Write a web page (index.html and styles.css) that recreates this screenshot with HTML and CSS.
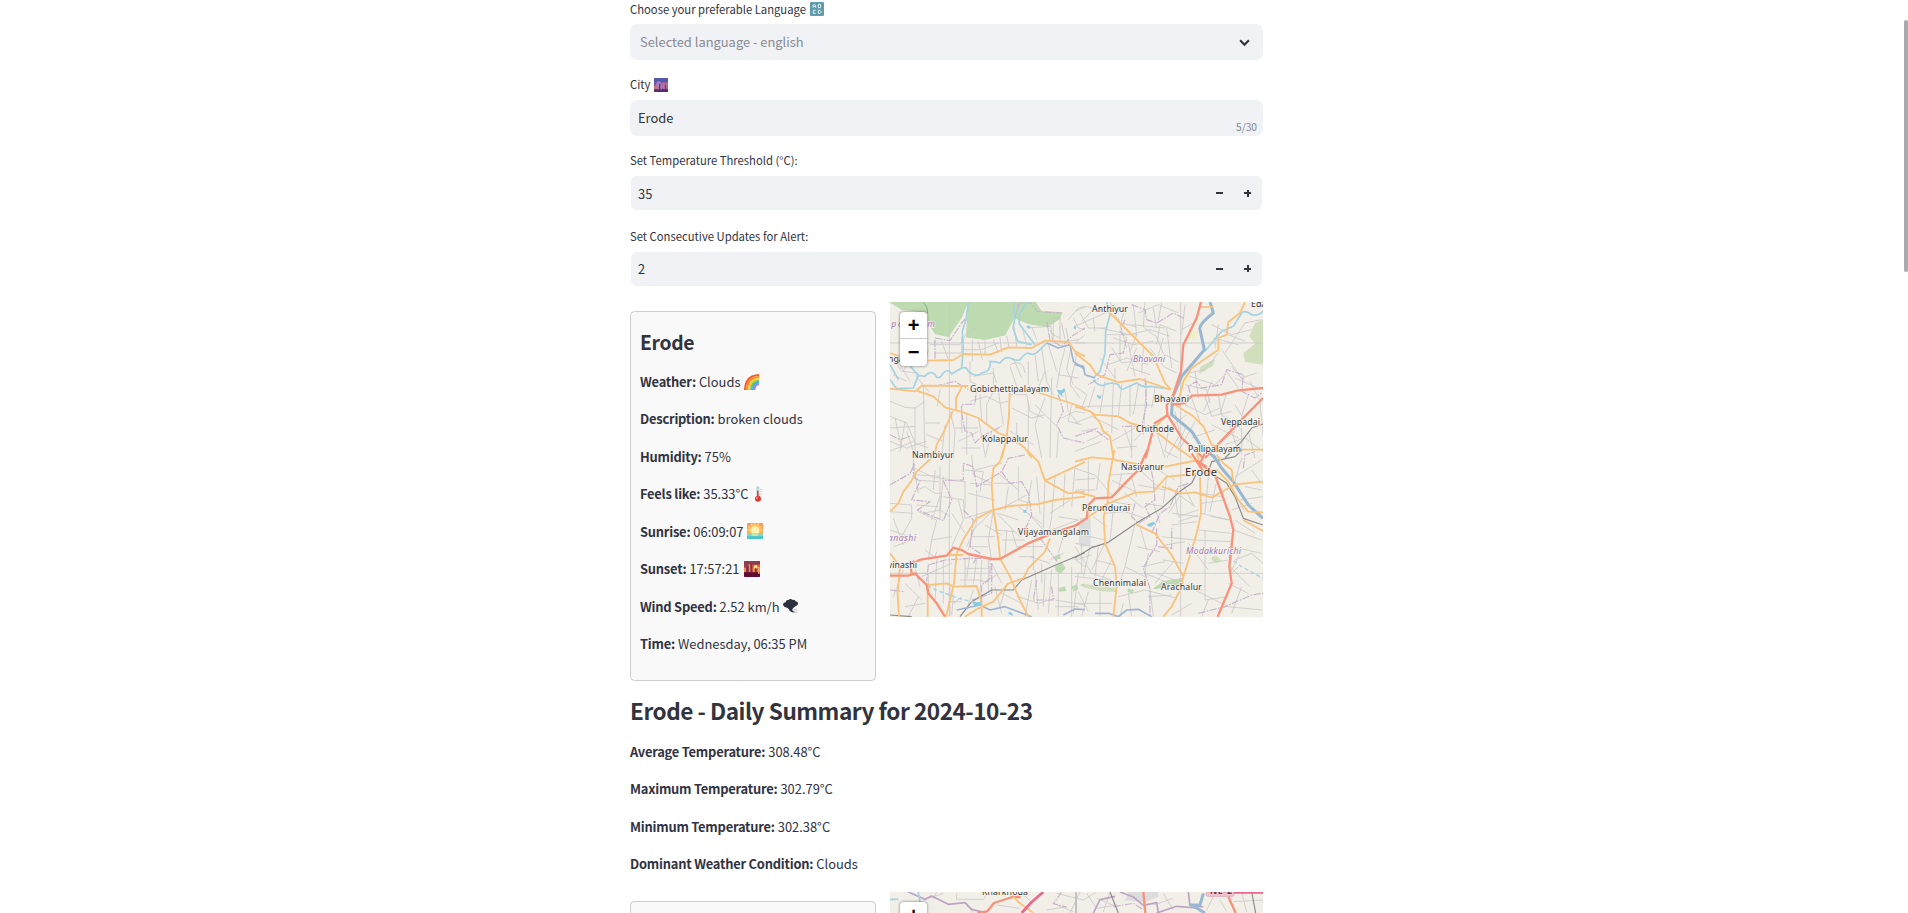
FILE: index.html
```html
<!DOCTYPE html>
<html lang="en">
<head>
<meta charset="utf-8">
<title>Weather</title>
<link rel="stylesheet" href="styles.css">
</head>
<body>
<main class="page">
  <section class="form">
    <div class="field">
      <label class="label label-first">Choose your preferable Language
        <svg class="emoji-sm" viewBox="0 0 42 42"><rect width="42" height="42" rx="4" fill="#5f9bab"/><g fill="none" stroke="#e3f1f4" stroke-width="3"><path d="M9 17v-7l4-3 4 3v7M9 13h8M25 7v10h6q3-2 0-5 3-3 0-5zM17 25h-7v9h7M25 25v9h5l3-3v-3l-3-3z"/></g></svg>
      </label>
      <div class="box select"><span class="placeholder">Selected language - english</span>
        <svg class="chevron" viewBox="0 0 10 8"><path d="M1 2l4 4 4-4" fill="none" stroke="#31333f" stroke-width="2"/></svg></div>
    </div>
    <div class="field">
      <label class="label">City
        <svg class="emoji-sm" viewBox="0 0 42 42"><rect width="42" height="42" rx="3" fill="#7853a0"/><path d="M0 3q0-3 3-3h36q3 0 3 3v7H0z" fill="#5259a8"/><path d="M23 14h19v18H23z" fill="#b46aa5"/><path d="M3 24l8-15 9 3 6 16-4 8H3z" fill="#a87bc4"/><path d="M0 25h10v9H0zM27 19h4v14h-4z" fill="#bd7769"/><path d="M0 34h42v5q0 3-3 3H3q-3 0-3-3z" fill="#592b71"/><path d="M15 17h4v16h-4zM33 20h3v12h-3z" fill="#5b347d"/></svg>
      </label>
      <div class="box"><span class="value">Erode</span><span class="count">5/30</span></div>
    </div>
    <div class="field">
      <label class="label">Set Temperature Threshold (°C):</label>
      <div class="box number"><span class="value">35</span><span class="steps"><i class="minus"></i><i class="plus"></i></span></div>
    </div>
    <div class="field">
      <label class="label">Set Consecutive Updates for Alert:</label>
      <div class="box number"><span class="value">2</span><span class="steps"><i class="minus"></i><i class="plus"></i></span></div>
    </div>
  </section>

  <section class="city">
    <article class="card">
      <h3 class="card-title">Erode</h3>
      <p class="line"><b>Weather:</b> Clouds
        <svg class="emoji" viewBox="0 0 48 48"><g fill="none" stroke-width="6"><path d="M3 48Q4 5 45 3" stroke="#fb5a22"/><path d="M9 48Q10 11 45 9" stroke="#ff8e1f"/><path d="M15 48Q16 17 45 15" stroke="#fbd22b"/><path d="M21 48Q22 22 45 20" stroke="#71c946"/><path d="M26 48Q27 27 45 25" stroke="#37b3e8"/><path d="M31 48Q32 32 45 30" stroke="#a184ed"/></g></svg></p>
      <p class="line"><b>Description:</b> broken clouds</p>
      <p class="line"><b>Humidity:</b> 75%</p>
      <p class="line"><b>Feels like:</b> 35.33°C
        <svg class="emoji thermo" viewBox="0 0 48 48"><path d="M16 4q5-8 9 0v30h-9z" fill="#b8d9df"/><circle cx="21" cy="38" r="9" fill="#d83a35"/><path d="M18 14h5v20h-5z" fill="#e04b3f"/><path d="M28 10h4M28 17h4M28 24h4" stroke="#a8adb0" stroke-width="2"/><circle cx="18" cy="36" r="3" fill="#ff8a78"/></svg></p>
      <p class="line"><b>Sunrise:</b> 06:09:07
        <svg class="emoji" viewBox="0 0 48 48"><defs><clipPath id="sky"><rect width="48" height="48" rx="3"/></clipPath></defs><g clip-path="url(#sky)"><path fill="#fc9562" d="M0 0h48v48H0z"/><circle cx="24" cy="24" r="23" fill="#fdb45c"/><path d="M24 24L1 8M24 24L12 0M24 24L36 0M24 24L47 8M24 24V0M24 24L0 20M24 24l24-4" stroke="#ffd777" stroke-width="3"/><circle cx="24" cy="23" r="13" fill="#fff3b1"/><path fill="#8ad3bd" d="M0 31h48v17H0z"/><path fill="#46c5cd" d="M0 40h48v8H0z"/><path fill="#c7e5b1" d="M12 31h24l-4 8H16z"/></g></svg></p>
      <p class="line"><b>Sunset:</b> 17:57:21
        <svg class="emoji" viewBox="0 0 48 48"><rect width="48" height="48" rx="3" fill="#a93c3e"/><path d="M0 3q0-3 3-3h42q3 0 3 3v8H0z" fill="#8f3b51"/><path d="M22 11h26v22H22z" fill="#d8683c"/><circle cx="35" cy="18" r="6" fill="#ffe084"/><path d="M0 20h6v14H0zM14 10h5v23h-5zM27 19h4v16h-4z" fill="#e79052"/><path d="M7 15h7v20H7zM20 8h5v26h-5zM33 22h5v12h-5z" fill="#873044"/><path d="M0 34h48v11q0 3-3 3H3q-3 0-3-3z" fill="#610d33"/><path d="M42 18h5v20h-5z" fill="#f0a85f"/></svg></p>
      <p class="line"><b>Wind Speed:</b> 2.52 km/h
        <svg class="emoji" viewBox="0 0 48 48"><path d="M0 19q1-6 8-6 1-8 8-7 7-6 13 0 7-2 9 4 8 2 7 9-4 6-10 7l-4 4-4 5 3 4 6 4q-10 2-16-5-3-7-8-9-10 0-12-10z" fill="#2e303e"/><path d="M29 37q8-4 13-1M31 43q6-2 10 0" stroke="#bbb" stroke-width="3" fill="none"/></svg></p>
      <p class="line"><b>Time:</b> Wednesday, 06:35 PM</p>
    </article>
    <div class="map">
      <svg class="tiles" width="373" height="315" viewBox="0 0 373 315">
        <rect width="373" height="315" fill="#f2efe9"/>
        <!-- north-west quarter -->
        <g class="quarter" transform="translate(-5 -4) scale(.33333)">
          <path class="wood" d="M15 12H250L243 118 300 125 360 112 388 60 430 78 487 87 525 62 532 42 470 41 452 12H250L230 60 190 118 150 108 128 75 128 45 50 35 15 14z"/>
          <path class="wood" d="M250 12H452L470 41 532 42 525 62 487 87 430 78 388 60 360 112 300 125 243 118z"/>
          <path d="M112 12q16 10 16 35" fill="none" stroke="#7fae86" stroke-width="3"/>
          <path class="minor" d="M193 12V480M15 135H600M135 140h90l20-35 40-20M150 165h80v-50M170 130l20 55M262 125v65M280 130l12 55M300 128v42M325 125l15 40M345 118l5 45M365 113l8 40M230 155h60l50-20M385 70l10 75M410 82l15 60M428 90l70-5 5 45M440 85l15 40M505 60v70M525 60v70M500 60h25M530 75l10 50M543 90l8 40 30-5M550 65l30-35 20-5M565 60l15 30 20 5M485 85l20 25 20 10M575 130l25-20M30 190l20 30 50 5M25 230l40 20M55 220l15-30M45 200l30 50M90 230l40 50M130 155l-10 40M115 265l5 215M120 310l-30 20-30-2-45-18M90 330v150M15 355l50 20 25 60 40 15M15 390l75-5M30 360l20 90M60 370l-15 90M15 430l50 20 60-20M65 400l20 60M15 460l70-30M120 375h45M125 410l50 20M165 275l-8 50M195 340l15 60-5 80M230 345v60M245 350v120M210 390h70M280 360l20 110M255 190v60l20 10M265 235l60-10 10 30M325 210v70l-20 40v60M285 290l5 80M255 310l50-15 40 20 25-5M340 280l15 100M375 290h50l10 50 40 20M400 280l60-10 20-50M375 205l20 60M385 180l25 60M375 200q40-20 45 25M430 190v70l30 20M450 170l10 80M470 150l15 100 20 40M490 140l25 80M540 150l-15 60-10 60M560 140l-15 75 20 45M575 170l-20 90 30 40M520 230l60 10M500 240l-5 240M540 280l10 60 30 40M480 300l-30 80 20 100M430 310v160M450 320l70 70M380 330l60 30 40-10M375 400l70 40M520 400l-5 80M550 370l40 10M560 320l-10 50M220 430l60-30M230 450h55M180 380l-10 100M320 400l-20 80M395 375v65M530 360l40-20 30 5"/>
          <path class="border" d="M150 125v65M150 120L195 128 230 75 243 60M388 65l15-50 35 0 20 25 70 5M485 70l10 55 35 20 30-30 40-25M230 345v-25l40-2 5-50M230 345l10 55 20 5 10 30 20-20 60-30M520 290l15 50-20 40 20 40 65 15M15 410l30 15 30-10M150 265l60-15 40 25"/>
          <path class="stream" d="M15 245L35 272 85 270 100 232 120 235Q135 215 150 230Q160 250 175 225Q190 210 200 228L230 210Q245 205 250 220Q275 240 290 225Q320 220 315 190 330 190 345 195Q360 175 375 180 392 190 405 185Q420 165 430 165 445 175 460 160L485 135M250 12L243 65 232 100 235 150 230 210M385 12L390 60 384 90 398 130 440 140M425 12L403 50 403 78 450 140M50 175L100 232M15 200l25 45"/>
          <path class="river" d="M485 135L520 150 555 140 565 190 600 215"/>
          <path class="road" d="M130 188L205 186 235 168 315 170 370 148 440 150 480 128 550 132 570 160 600 175M15 165l45 15M15 272L90 280 110 263 250 264M110 263L95 278 145 295 180 328 235 343 280 360 340 405 380 420 420 450 440 480M203 340L175 405 155 440 150 470M213 338V300L230 268M374 285L372 350 365 420 350 480M420 270L600 330"/>
          <path d="M520 285l-5-10 15 2 8-7 3 10-11 8 5 8-10-5zM565 90l4-8 5 5-2 8zM424 88l5-7 8 6-5 5z" class="lake"/>
        </g>
        <!-- north-east quarter -->
        <g class="quarter" transform="translate(185 -4) scale(.33333)">
          <path class="wood pale" d="M564 65L540 75 523 115 540 138 505 165 510 192 564 200zM370 225l8-20 42-23-5 20-40 25z"/>
          <path fill="#eef0c8" d="M340 95l30 5-8 25-20-3zM325 230l20 5-10 25-14-8z"/>
          <path class="minor" d="M317 12V480M0 135H564M0 40l35-15 65 20M0 85l90-40M15 45l25 45 55 0M20 70l40-40 50 12M55 60l5 40M95 110h90M75 90l90 20 60-15 60 20M105 12l25 60 55 15M150 30l-15 55M130 60l25 90M175 20l10 90-20 50M210 12l-5 75 40 30 20 50 45 25M235 30l10 60M260 12l-10 55M190 45l60-25 60 25M170 80l100 10M245 140l10-60 50 20M115 120l60 20 60-10M110 150l30 45 70-10M135 110v80M160 135l20 100M185 150l-30 70M205 150l-5 80M100 200l55-20 65 20M75 180l45 60M120 210v40M165 210l60 20M225 150l40 55 40 20M265 120l-20 70M275 90l15 120M330 20l-10 90M355 75l-35 20M410 80l60 30 60-15M430 80l-10 70M460 110l50 20M560 65l-50 10-60 90M415 120l75 20M440 155l60 85M430 165l-40 50-50 10M470 205l40 50M345 235l75 25 30-30M360 220l10 80M330 260l65 15 10 40M410 250l-20 55M455 220l35 50M480 240l70 30M500 240l45-15M525 250l30 60 9 100M430 290l10 60 60 45M455 285l-20 65M390 295l20 60 60-15M405 300l-20 40M350 300l25 70M330 320l60 30 45-20M335 350l-40 30M300 340l15 70M0 265l35 25-15 40M60 265l-20 65M0 330l45-5 190-4M90 250l-15 95M115 255l-5 150M140 260l-10 95M165 260v95M190 260l-15 90M215 250l-10 160M240 270l-10 60M0 375l50-20 80 40M20 400l50-10M35 430l65-30M110 430l70-40M125 450l60-5M170 380v100M150 395l20 60M225 380l-50 50M245 400l25 80M280 400l-10 60 40 20M315 410l-40 70M335 380l-30 75M360 370l-50 90M350 420l70-25M410 380l80 40M455 355l30 90M480 400l-70 50M480 320l30 50M520 290l-20 65M450 440l60-20 54 40M500 390v80M520 400l20 80M0 460l80-30"/>
          <path class="border" d="M170 20l40 15 5 30 30 10 50-30 30 15M150 65l-15 35 20 20-10 45-40 5-15 60-50 30M210 240l5 80-15 65-60 0M345 285l-5-20 25-15 15 20 60-10 15-45 50 15-5 50 40 20 20-15M0 415l60-20 40 30"/>
          <path class="rail" d="M564 378L530 390 500 430 450 480"/>
          <path class="stream" d="M95 12L105 50 92 100 90 165 75 220 55 240M55 245Q70 265 85 262 110 250 130 260 138 277 145 273L185 255Q205 270 225 265L275 272M564 40Q550 55 530 50 510 35 500 45L475 85 440 100 390 160"/>
          <path class="river wide" d="M405 12L415 45Q370 80 375 95L388 155 350 200 320 235 292 300 290 350 350 400 375 440 420 480"/>
          <path class="river" d="M0 198L25 205 30 230 60 240M0 200l20 5"/>
          <path class="road" d="M100 40L180 120 235 175 270 255 288 275M0 165L45 200 65 230 130 253 195 243 285 275M510 12L495 45 460 72 455 110 430 120 430 155 350 210 325 250 312 305M0 325L45 340 60 350 130 355 165 375 235 395 280 430 350 480M50 345L75 375 85 400 105 415 115 480M280 345L235 395M300 320L355 355 385 385 410 440 440 455H564M375 28l40-2"/>
          <path class="trunk" d="M378 12L365 60 325 140 318 220 295 290 275 322 277 350 320 420 385 480M290 320L330 315 350 293 440 290 490 277 564 270M564 300L500 365 390 480M280 350L240 375 225 430 212 480"/>
          <path class="lake" d="M65 290l10 4 5-3-4 12-8-3z"/>
        </g>
        <!-- south-west quarter -->
        <g class="quarter" transform="translate(-5 148) scale(.33333)">
          <path class="wood" d="M508 318l15-5 5 12-15 5zM510 350l20-12 12 15-15 18-15-8zM520 415l20-6 3 14-20 2zM560 410l15-8 5 15-15 8zM585 405l15-5v12z"/>
          <path d="M582 225h20v65l-20-5z" fill="#ddd"/>
          <path class="minor" d="M193 24V500M15 370H600M85 24l5 50 75 5M90 55l50 25 60 10M90 90l70 5M95 120l25-10 30 20 20 0M90 70l10 60M150 60l-5 60M165 50v160M175 80l-10 100 30 20M95 165l65 5M115 190l50-10M140 210l25-70M15 160l65 5 0 40-30 55M15 185l70 5M25 205l30 80M100 185l55 25-15 60-10 60M190 90l50 5 0 80M175 140l60 10 5 55 80-25M200 190l40 60M220 150l15 60-35 80M240 60l55 5-10 60M255 100l65 5M260 15l5 60 55 25M270 60l80-20M340 70l60 50M325 100l60 0M275 120v100l-30 70M325 180l-60 60-15 60M330 150l-80-20M325 180l-15 90 10 60M325 180l80 80M340 190l60 20M340 180l85-45M370 110l-10 70M400 50v100l40 10M440 90l-15 90M455 80l10 110M480 95l-5 140M510 80l-10 120-10 60M540 70l-5 100M570 50l-10 120M495 190l60-40M430 190l50 55M400 170l70 50M365 240l-5 80M380 240l15 50 80 0M350 270h70M330 240l60 5M300 225l50 30M260 260h70M255 290l55 0M15 240l55 20M25 290l60-20M140 270l60-10M120 300l40 30M155 305l-5 15M85 330l20 80M95 370l100 0M110 380l90-40M130 370v60M155 330l-5 130M175 330v130M195 400v100M180 430l25 5-5 60M190 455h40M205 460l25-20M240 320v90M255 315l-10 70M275 330l-10 70M240 355h70M225 390l70 0M290 330l-5 110M310 330v100M285 395h25M265 420l-20 60M320 340l30 60M340 370l-40 30M330 410l20 80M350 430l60 30M365 400l-20 70M440 390l-20 110M450 360l10 120M480 370l-5 100M400 440l60 20 50-15M500 360l-10 130M520 370v130M560 350v150M580 370l-15 120M510 450l90 15M510 470l70 0M435 320l60 20M470 340v60M560 320l40 30M535 310l-40 20M445 270v90M400 320l50 0M60 400l50 50M55 360l-30 80M100 440l-30 60M60 470l60-10M520 200l60 10M500 240l80-30M540 240l-20 70"/>
          <path class="border" d="M15 105L75 70 90 40M85 40V80L105 93 80 150 135 155 97 180 175 212 200 150 175 92 235 90V40L265 50 275 110 350 65 370 25 420 15M350 65L375 100 410 95 430 130 440 195 420 240 470 270 505 320 520 340M235 180l30 30-10 80 30 20-20 30M130 345l50-15 80-5 55 0v60l-25 20v60M130 345l-5 50M455 390l-10 60 60 0-5-40M15 420l40 5M320 340v90l-60 20"/>
          <path class="rail" d="M225 500L260 455 320 420 385 420 410 390 500 350 600 308M15 495L80 500"/>
          <path class="stream dashed" d="M80 370L140 415 220 445 280 460"/>
          <path class="river" d="M215 480L285 465 315 480 360 470 440 500M535 495l35-18 30 2"/>
          <path class="road" d="M140 24L95 65 78 95 55 125 40 160 15 185M355 0L345 35 325 55 320 100 325 180 340 270 345 325 375 380 400 440 430 500M325 180L275 205 240 260 215 310 207 400 183 500M325 180L375 168 460 162 510 150 600 140M425 0L460 35 480 92 600 36M480 92L550 130 600 125M495 265L480 305 430 355 415 385 370 400 325 455 280 475 240 500M130 405L185 400 205 410 275 408 290 460V500M15 310L45 350 38 430 42 500M128 400V500M190 315h45"/>
          <path class="trunk" d="M15 377H70L90 370 125 405 130 430 155 460 180 500M80 370L75 340 110 328 185 317 205 293 230 300 250 312 320 327 345 327 430 280 500 250 575 225 600 210"/>
          <path class="lake" d="M415 180h9v8h-9zM262 455l20 2 7-4 0 12-20 5zM370 485l10 3 5 10-14-5z"/>
        </g>
        <!-- south-east quarter -->
        <g class="quarter" transform="translate(185 148) scale(.33333)">
          <path class="wood" d="M235 415l30-22 60-10v22l-50 5-35 8zM158 415l18 5-2 10-16-3zM0 405l10 2-10 12z"/>
          <path class="wood pale" d="M28 402l90 12 8 12-50-2-50-12zM410 320l15-3 15 15-15 7-15-8z"/>
          <path d="M15 205l32-2v80l-32 10z" fill="#ddd"/>
          <path class="minor" d="M317 24V500M0 370H564M0 55l60 20 50 60M40 30v110M75 40l-10 80M0 90l60-5M0 120h60M100 75l80-5M110 90l70 35M140 70l-10 50M170 80l15 60M200 65l50 45M240 55l60 35M190 105l80 15M150 130l55 45M110 155l60 10M90 190l60-5 60 20M115 175l-10 100M0 280l60 10M55 200l40 30M0 250l90 20M180 220l-30 130-20 60M195 230l20 70M235 160l20 60M210 160l60 10M275 80l-10 80M320 130l-40 60M300 140l10 60 60-20M290 190l80 10M310 215l60-20M325 105l30 60M280 110l80 60M400 80l-10 110M425 95l-20 90M380 130l60 10M380 160l70-10M380 190l80 20M370 240l100 10M290 225l75-10M260 260l100 10 110 5M270 285l60-10M340 280l60 80M390 240v120M410 200l60 10M470 180l60-20M480 210l60 40M460 95l50 90M510 110l50 10M495 150l70-10M480 80l80-50M500 24l-20 70M530 60l30 40M470 290l90 20M475 240l85 30M480 330l50-20 34 30M465 350l60 60M460 400l60 30M500 300l-35 70M390 360l0 90 70-10M340 410l120 60 100 10M325 400l-80-30M325 420h60M300 330l-60 70M220 310l-10 60 60 25M225 420l10 80M220 440l70-5M130 440l80-20 95 25M145 460l-10 40M160 430l10 70M0 290l50 80 60 20M20 280v90M45 290l-20 90M70 290l-10 90M0 330l50-15M60 330l60 15M0 380l100 10M90 280l-40 80M110 330l-30 60M10 425l30 60M40 425l-20 75M75 425v75M0 460h110M350 460l-60 35M400 450l-20 50M500 410l-30 80M150 350l60 30M200 350l70-15M185 290l70 15M265 330l60 10M400 340l60-10M490 350l-20 20"/>
          <path class="border" d="M180 160l-10 40 20 20 35-20-15-30 30-20-5-60-10-45M230 250l25-60 30-20 25-60 30-10M245 235v50l-25 40-15 30 20 60 0 85M250 290l40 5v-60M370 490l80-20 80-35 34-5M505 55l5-40 30-10"/>
          <path class="rail" d="M0 323L50 293 100 277 190 215 260 175 320 120 350 100 365 70M400 65l10-30 70-15 20-20M425 80L455 100 480 140 505 205 564 225"/>
          <path class="stream dashed" d="M460 320L500 350 564 385"/>
          <path class="river wide" d="M415 15L440 55 475 95 520 165 564 205"/>
          <path class="river" d="M60 490L100 490 130 500 155 480 190 478 230 500"/>
          <path class="road" d="M0 35L50 22 120 28M118 0L100 100 98 155 86 200 90 280 120 350 125 410 115 500M0 125L60 140M100 160L180 128 235 125 275 80 365 72M120 30L200 45 270 50 370 30M260 110L320 130 360 127 410 143 450 120 480 103 564 95M375 80L378 190 365 250 350 300 325 380 315 420 290 470 265 500M180 222L240 250 290 315 325 380M35 205L98 160M380 70L425 60 460 95 490 150 520 185 564 187M425 15l20 25 25 20 5 35M505 210l59 33M365 0l10 50"/>
          <path class="trunk" d="M217 0L190 60 155 95 110 142 60 145 40 165 35 205 0 228M350 10L385 65M390 10L375 40 420 75 465 200 475 240 463 350 470 400 428 500M360 30l35 20"/>
          <path class="lake" d="M218 222l18-7 5 5-12 10-12-2z"/>
        </g>
        <g class="places">
          <text x="202" y="9.500" textLength="36">Anthiyur</text><text x="361" y="5">Edappadi</text>
          <text x="80" y="90" textLength="79">Gobichettipalayam</text><text x="264" y="99.500" textLength="35">Bhavani</text>
          <text x="92" y="140" textLength="46">Kolappalur</text><text x="246" y="129.500" textLength="38">Chithode</text>
          <text x="331" y="122.500" textLength="39">Veppadai</text><text x="298" y="150" textLength="53">Pallipalayam</text>
          <text x="22" y="155.500" textLength="42">Nambiyur</text><text x="231" y="167.500" textLength="43">Nasiyanur</text>
          <text class="big" x="295" y="174" textLength="32">Erode</text><text x="192" y="209" textLength="48">Perundurai</text>
          <text x="128" y="232.500" textLength="71">Vijayamangalam</text><text x="-8" y="266" textLength="35">Avinashi</text>
          <text x="203" y="284" textLength="53">Chennimalai</text><text x="271" y="288" textLength="41">Arachalur</text><text x="-2" y="60">ngalam</text>
          <g class="region"><text x="243" y="60" textLength="32">Bhavani</text><text x="-12" y="239" textLength="38">Avanashi</text><text x="296" y="252" textLength="55">Modakkurichi</text><text x="-8" y="25" textLength="53">mpalayam</text></g>
        </g>
      </svg>
      <div class="zoom"><span class="zin">+</span><span class="zout">−</span></div>
    </div>
  </section>

  <section class="summary">
    <h2 class="heading">Erode - Daily Summary for 2024-10-23</h2>
    <p class="line"><b>Average Temperature:</b> 308.48°C</p>
    <p class="line"><b>Maximum Temperature:</b> 302.79°C</p>
    <p class="line"><b>Minimum Temperature:</b> 302.38°C</p>
    <p class="line"><b>Dominant Weather Condition:</b> Clouds</p>
  </section>

  <section class="city">
    <article class="card card-next"></article>
    <div class="map map-next">
      <svg class="tiles" width="373" height="21" viewBox="0 0 373 21">
        <rect width="373" height="21" fill="#f2efe9"/>
        <g class="quarter" transform="translate(-10 -12) scale(.33333)">
          <path d="M745 36h90v15l-40 15-60-5z" fill="#ddd"/>
          <path class="minor" d="M130 60l60-20M160 55l10-20M230 58h80l15-22M230 40v18M420 36l30 25M520 70l60 25M530 40l80 20 40-24M600 36l-30 63M620 40l30 45 60-10M690 36l-20 60M650 55l60 25M820 75l60-20M850 40l30 50M1060 65l90-5M1085 36l15 60M1000 50l-20 40M1020 60l20 35M500 90l60-10M260 75l20 24M350 75l70 10"/>
          <path class="border2" d="M85 36l50 22 20-10 50 25 50-5 20 20 40 10M640 99l20-40 45-10M720 36l40 15 30 25 40-8 5 30M830 99l60-20 60 5 25 15M925 36l5 40 40 5"/>
          <path class="border" d="M545 36l-25 35 40 10M700 80l60-10 30 20"/>
          <path class="stream" d="M115 36l5 30M30 58h25"/><path class="river wide" d="M970 40l-10 35-30 0M940 78l35 21"/>
          <path class="rail" d="M690 36l25 63M1115 36l12 63"/><path class="border2 solid" d="M588 36v63"/>
          <path class="trunk" d="M292 99l30-5 20-25 55-18 25 0M790 36l6 63M1045 50l22 49"/><path class="road" d="M400 50l20 20 20 15 20 14"/>
          <path class="motorway" d="M490 36l-35 30-30 33M1062 37h90"/>
          <path d="M980 36h82v10l-4 3h-76l-5-5z" fill="#efc6cf" stroke="#d797a8" stroke-width="2"/>
        </g>
        <g class="places"><text x="92" y="3" textLength="46">Kharkhoda</text><text x="320" y="2" textLength="22" class="ref">NE-2</text></g>
      </svg>
      <div class="zoom zoom-next"><span class="zin">+</span></div>
    </div>
  </section>
</main>
<div class="scroll-thumb"></div>
</body>
</html>
```
FILE: styles.css
```css
* { box-sizing: border-box; }
html { height: 100%; overflow: hidden; }
body { margin: 0; height: 913px; overflow: hidden; background: #fff; color: #31333f; font: 12.9px "Noto Sans CJK JP", "Noto Sans CJK SC", "Noto Sans", sans-serif; }
.page { width: 633px; height: 913px; margin-left: 630px; overflow: hidden; }
.form { display: flex; flex-direction: column; gap: 14.4px; height: 302px; }
.field { height: 61.2px; display: flex; flex-direction: column; justify-content: space-between; }
.field:first-child { height: 60px; }
.label { display: flex; align-items: center; gap: 4px; height: 18.9px; margin-top: 1px; font-size: 11.28px; line-height: 18.9px; white-space: nowrap; }
.label-first { margin-top: 0; }
.emoji-sm { width: 14px; height: 14px; }
.box { position: relative; display: flex; justify-content: space-between; align-items: center; height: 36px; padding: 0 9px; border-radius: 7.2px; background: #f0f2f6; }
.select { padding: 0 13px 0 10px; }
.placeholder { margin-top: -1px; color: #898b92; }
.chevron { width: 11px; height: 9px; }
.value { margin-left: -1px; }
.count { position: absolute; right: 6px; bottom: 1px; color: #83858c; font-size: 10.2px; line-height: 16px; }
.number { border: 1px solid #fff; padding-left: 8px; }
.steps { display: flex; gap: 21px; padding-right: 2px; }
.minus, .plus { width: 7px; height: 7px; background: linear-gradient(#31333f, #31333f) center / 7px 2px no-repeat; }
.plus { background: linear-gradient(#31333f, #31333f) center / 7px 2px no-repeat, linear-gradient(#31333f, #31333f) center / 2px 7px no-repeat; }
.city { display: flex; gap: 14px; }
.card { width: 246px; height: 370px; margin-top: 9px; padding: 9px; border: 1px solid #ccc; border-radius: 4.5px; background: #f9f9f9; }
.card-title { margin: 8px 0 15px; font-size: 19.3px; line-height: 26px; font-weight: 600; letter-spacing: -.3px; }
.card-next { height: 12px; border-bottom: 0; border-radius: 4.5px 4.5px 0 0; padding: 0; }
.line { display: flex; align-items: center; gap: 3px; margin: 0 0 14.4px; height: 23.04px; line-height: 23.04px; white-space: nowrap; }
.line b { font-weight: 600; letter-spacing: -.22px; }
.emoji { width: 16px; height: 16px; margin-left: 1px; }
.thermo { margin-left: -1px; }
.map { position: relative; width: 373px; height: 315px; overflow: hidden; }
.map-next { height: 21px; }
.tiles { display: block; }
.quarter path { stroke-linejoin: round; }
.quarter .minor { fill: none; stroke: #c9c7c8; stroke-width: 2.4; }
.quarter .border { fill: none; stroke: #c9b3cd; stroke-width: 3.5; stroke-dasharray: 22 4 5 4; }
.quarter .border2 { fill: none; stroke: #bda3c2; stroke-width: 5; }
.quarter .solid { stroke: #b9b9bf; }
.quarter .stream { fill: none; stroke: #a4d3e2; stroke-width: 5; }
.quarter .dashed { stroke-dasharray: 12 8; stroke-width: 4; }
.quarter .river { fill: none; stroke: #9fb5d2; stroke-width: 5; }
.quarter .wide { stroke: #98b8d1; stroke-width: 9; }
.quarter .road { fill: none; stroke: #f9c37d; stroke-width: 5.5; }
.quarter .trunk { fill: none; stroke: #f9927a; stroke-width: 7; }
.quarter .motorway { fill: none; stroke: #e9688c; stroke-width: 8; }
.quarter .rail { fill: none; stroke: #8c8b8b; stroke-width: 3.5; }
.quarter .lake { fill: #8accdf; }
.quarter .wood { fill: #bddab1; }
.quarter .pale { fill: #d1dfbd; }
.places text { font: 8.8px "Noto Sans", sans-serif; fill: #333; stroke: #f6f3ee; stroke-width: 1.6px; paint-order: stroke; }
.places .big { font-size: 11px; }
.places .region text { font-style: italic; fill: #a17aae; }
.places .ref { font-weight: bold; fill: #7c2f45; stroke: none; }
.zoom { position: absolute; left: 10px; top: 10px; width: 27px; height: 54px; border-radius: 4px; background: #fff; box-shadow: 0 0 3px rgba(0,0,0,.55); font: bold 20px/27px "Liberation Sans", sans-serif; color: #000; text-align: center; }
.zoom span { display: block; height: 27px; }
.zoom-next { height: 27px; border-radius: 4px 4px 0 0; }
.zin { border-bottom: 1px solid #ccc; }
.summary { height: 211px; padding-top: 15px; }
.heading { margin: 0 0 14px; font-size: 22.6px; line-height: 30px; font-weight: 600; letter-spacing: -.48px; white-space: nowrap; }
.scroll-thumb { position: absolute; right: 0; top: 20px; width: 4px; height: 252px; border-radius: 2px; background: #a9a9af; }
```
